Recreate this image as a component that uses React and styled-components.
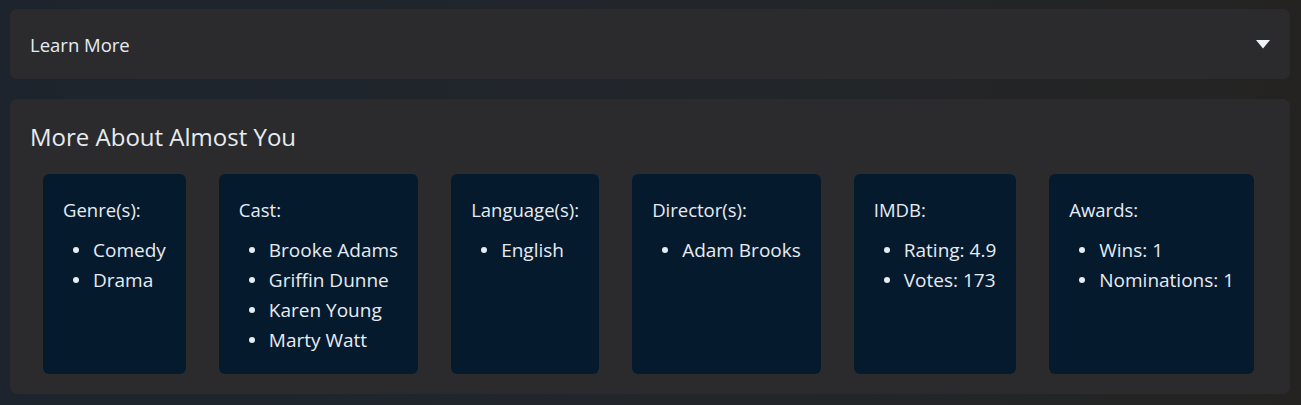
import React from "react";
import styled, { createGlobalStyle } from "styled-components";

const Global = createGlobalStyle`
  html, body { margin: 0; padding: 0; }
  body {
    background: linear-gradient(90deg, #1d242d 0%, #22262b 50%, #242322 100%);
    min-height: 405px;
    font-family: "Open Sans", "Noto Sans", sans-serif;
    color: #e6ecf2;
  }
`;

const Page = styled.div`
  padding: 9px 11px 12px 10px;
  display: flex;
  flex-direction: column;
  gap: 20px;
`;

const Accordion = styled.div`
  height: 70px;
  background: #2b2b2d;
  border-radius: 7px;
  display: flex;
  align-items: center;
  justify-content: space-between;
  padding: 0 20px;
`;

const AccordionTitle = styled.span`
  font-size: 18.5px;
  color: #e6ecf2;
`;

const Caret = styled.svg`
  width: 14px;
  height: 9px;
  fill: #eef3f8;
`;

const Section = styled.section`
  background: #2b2b2d;
  border-radius: 7px;
  padding: 22px 20px 20px 20px;
`;

const Heading = styled.h2`
  margin: 0 0 21px 0;
  font-size: 24px;
  font-weight: 400;
  line-height: 32px;
`;

const Cards = styled.div`
  display: flex;
  gap: 33px;
  padding-left: 13px;
`;

const Card = styled.div`
  background: #061a2e;
  border-radius: 6px;
  padding: 21px 20px 19px 20px;
  min-height: 160px;
`;

const Label = styled.div`
  font-size: 18.5px;
  line-height: 30px;
  margin-bottom: 10px;
`;

const List = styled.ul`
  margin: 0;
  padding-left: 30px;
  list-style: none;
`;

const Item = styled.li`
  position: relative;
  font-size: 19px;
  line-height: 30px;
  white-space: nowrap;

  &::before {
    content: "";
    position: absolute;
    left: -20px;
    top: 12px;
    width: 6px;
    height: 6px;
    border-radius: 50%;
    background: #e6ecf2;
  }
`;

const data = [
  { label: "Genre(s):", items: ["Comedy", "Drama"] },
  { label: "Cast:", items: ["Brooke Adams", "Griffin Dunne", "Karen Young", "Marty Watt"] },
  { label: "Language(s):", items: ["English"] },
  { label: "Director(s):", items: ["Adam Brooks"] },
  { label: "IMDB:", items: ["Rating: 4.9", "Votes: 173"] },
  { label: "Awards:", items: ["Wins: 1", "Nominations: 1"] },
];

export default function App() {
  return (
    <>
      <Global />
      <Page>
        <Accordion>
          <AccordionTitle>Learn More</AccordionTitle>
          <Caret viewBox="0 0 14 9">
            <path d="M0 0 H14 L7 8.5 Z" />
          </Caret>
        </Accordion>
        <Section>
          <Heading>More About Almost You</Heading>
          <Cards>
            {data.map((c) => (
              <Card key={c.label}>
                <Label>{c.label}</Label>
                <List>
                  {c.items.map((i) => (
                    <Item key={i}>{i}</Item>
                  ))}
                </List>
              </Card>
            ))}
          </Cards>
        </Section>
      </Page>
    </>
  );
}
